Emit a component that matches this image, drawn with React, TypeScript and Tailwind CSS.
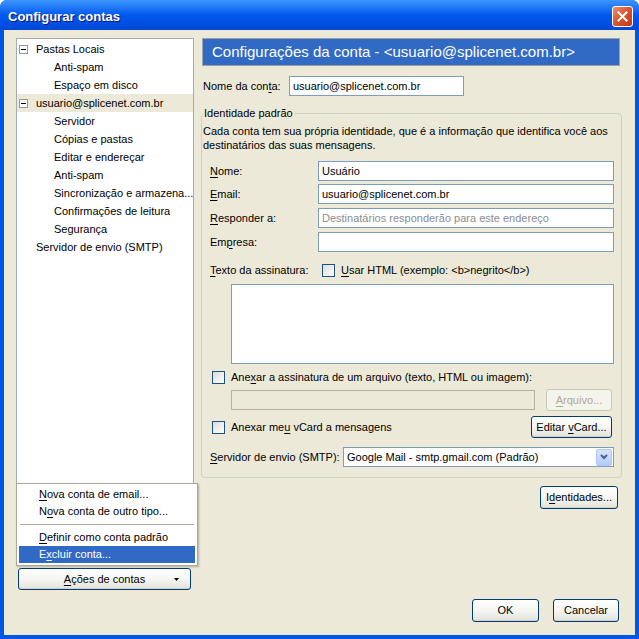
import React from "react";

const font = { fontFamily: '"Liberation Sans", Arial, sans-serif' };

function U({ children }: { children: React.ReactNode }) {
  return <span className="underline underline-offset-[2px]">{children}</span>;
}

function XpButton({
  children,
  className = "",
  disabled = false,
}: {
  children: React.ReactNode;
  className?: string;
  disabled?: boolean;
}) {
  return (
    <div
      className={
        "flex items-center justify-center rounded-[3px] border text-[11px] " +
        (disabled
          ? "border-[#C9C7BA] bg-[#F5F4EA] text-[#ACA899] "
          : "border-[#003C74] bg-gradient-to-b from-white via-[#F6F6F3] to-[#E3E2D9] text-black shadow-[inset_0_-1px_0_#D6D0C5] ") +
        className
      }
    >
      {children}
    </div>
  );
}

function Checkbox() {
  return (
    <div className="h-[13px] w-[13px] shrink-0 border border-[#1C5180] bg-gradient-to-br from-[#DCDCD7] to-white" />
  );
}

function TextInput({
  value,
  placeholder,
  className = "",
}: {
  value?: string;
  placeholder?: string;
  className?: string;
}) {
  return (
    <div
      className={
        "flex h-[20px] items-center border border-[#7F9DB9] bg-white pl-[3px] text-[11px] " +
        className
      }
    >
      {value ? (
        <span className="text-black">{value}</span>
      ) : (
        <span className="text-[#8D8D8D]">{placeholder}</span>
      )}
    </div>
  );
}

function Expander() {
  return (
    <div className="flex h-[9px] w-[9px] items-center justify-center border border-[#919B9C] bg-white">
      <div className="h-px w-[5px] bg-black" />
    </div>
  );
}

type TreeItem = { label: string; level: 0 | 1; expander?: boolean; selected?: boolean };

const tree: TreeItem[] = [
  { label: "Pastas Locais", level: 0, expander: true },
  { label: "Anti-spam", level: 1 },
  { label: "Espaço em disco", level: 1 },
  { label: "usuario@splicenet.com.br", level: 0, expander: true, selected: true },
  { label: "Servidor", level: 1 },
  { label: "Cópias e pastas", level: 1 },
  { label: "Editar e endereçar", level: 1 },
  { label: "Anti-spam", level: 1 },
  { label: "Sincronização e armazena...", level: 1 },
  { label: "Confirmações de leitura", level: 1 },
  { label: "Segurança", level: 1 },
  { label: "Servidor de envio (SMTP)", level: 0 },
];

export default function App() {
  return (
    <div
      className="flex h-[639px] w-[639px] flex-col overflow-hidden rounded-t-[7px] bg-[#0055E5] text-[11px] text-black"
      style={font}
    >
      {/* title bar */}
      <div className="flex h-[30px] shrink-0 items-center justify-between bg-gradient-to-b from-[#3D95FF] via-[#0058EE] to-[#0047D8] pl-[8px] pr-[6px]">
        <span className="pt-[3px] text-[13px] font-bold text-white [text-shadow:1px_1px_0_#0A1883]">
          Configurar contas
        </span>
        <div className="mt-[2px] flex h-[21px] w-[21px] items-center justify-center rounded-[3px] border border-white bg-gradient-to-br from-[#E9906F] via-[#D9522C] to-[#C0391A]">
          <svg width="11" height="11" viewBox="0 0 11 11">
            <path d="M1.5 1.5 L9.5 9.5 M9.5 1.5 L1.5 9.5" stroke="white" strokeWidth="2" strokeLinecap="square" />
          </svg>
        </div>
      </div>

      {/* client */}
      <div className="mx-[4px] mb-[4px] flex flex-1 flex-col bg-[#ECE9D8] px-[12px] pt-[8px]">
        <div className="flex h-[552px]">
          {/* left column */}
          <div className="relative flex w-[184px] shrink-0 flex-col">
            <div className="h-[527px] w-[178px] border border-[#A5ACB2] bg-white pt-[1px]">
              {tree.map((t, i) => (
                <div
                  key={i}
                  className={
                    "flex h-[18px] items-center whitespace-nowrap " +
                    (t.selected ? "bg-[#ECE9D8]" : "")
                  }
                >
                  {t.level === 0 ? (
                    <>
                      <div className="ml-[2px] w-[9px]">{t.expander ? <Expander /> : null}</div>
                      <span className="ml-[8px]">{t.label}</span>
                    </>
                  ) : (
                    <span className="ml-[37px]">{t.label}</span>
                  )}
                </div>
              ))}
            </div>
            <XpButton className="relative ml-[2px] mt-[3px] h-[22px] w-[173px]">
              <span>
                <U>A</U>ções de contas
              </span>
              <svg className="absolute right-[11px] top-[9px]" width="5" height="3" viewBox="0 0 5 3">
                <path d="M0 0 H5 L2.5 3 Z" fill="black" />
              </svg>
            </XpButton>

            {/* popup menu */}
            <div className="absolute left-0 top-[445px] w-[182px] border border-[#ACA899] bg-white p-[2px] shadow-[1px_1px_2px_rgba(0,0,0,0.25)]">
              <div className="flex h-[17px] items-center pl-[20px]">
                <U>N</U>ova conta de email...
              </div>
              <div className="flex h-[17px] items-center pl-[20px]">
                N<U>o</U>va conta de outro tipo...
              </div>
              <div className="flex h-[9px] items-center px-[1px]">
                <div className="h-px w-full bg-[#ACA899]" />
              </div>
              <div className="flex h-[17px] items-center pl-[20px]">
                <U>D</U>efinir como conta padrão
              </div>
              <div className="flex h-[17px] items-center bg-[#316AC5] pl-[20px] text-white">
                E<U>x</U>cluir conta...
              </div>
            </div>
          </div>

          {/* right column */}
          <div className="flex w-[423px] shrink-0 flex-col">
            <div className="ml-[2px] flex h-[28px] w-[418px] items-center border border-[#A0A0A0] bg-[#316AC5] pl-[9px] text-[15px] text-white">
              Configurações da conta - &lt;usuario@splicenet.com.br&gt;
            </div>

            <div className="mt-[10px] flex h-[20px] items-center">
              <span className="ml-[3px] w-[86px]">
                Nome da con<U>t</U>a:
              </span>
              <TextInput value="usuario@splicenet.com.br" className="w-[175px]" />
            </div>

            <fieldset className="ml-[1px] mt-[10px] w-[421px] rounded-[4px] border border-[#D0D0BF] px-0 pb-[10px]">
              <legend className="ml-[1px] px-[1px] leading-[14px]">Identidade padrão</legend>
              <p className="ml-[1px] mt-[4px] leading-[14px]">
                Cada conta tem sua própria identidade, que é a informação que identifica você aos
                <br />
                destinatários das suas mensagens.
              </p>

              <div className="mt-[9px] flex items-center">
                <span className="ml-[8px] w-[108px]">
                  <U>N</U>ome:
                </span>
                <TextInput value="Usuário" className="w-[296px]" />
              </div>
              <div className="mt-[3px] flex items-center">
                <span className="ml-[8px] w-[108px]">
                  <U>E</U>mail:
                </span>
                <TextInput value="usuario@splicenet.com.br" className="w-[296px]" />
              </div>
              <div className="mt-[4px] flex items-center">
                <span className="ml-[8px] w-[108px]">
                  <U>R</U>esponder a:
                </span>
                <TextInput
                  placeholder="Destinatários responderão para este endereço"
                  className="w-[296px]"
                />
              </div>
              <div className="mt-[4px] flex items-center">
                <span className="ml-[8px] w-[108px]">
                  Em<U>p</U>resa:
                </span>
                <TextInput className="w-[296px]" />
              </div>

              <div className="mt-[10px] flex h-[17px] items-center">
                <span className="ml-[8px] w-[112px]">
                  <U>T</U>exto da assinatura:
                </span>
                <Checkbox />
                <span className="ml-[6px]">
                  <U>U</U>sar HTML (exemplo: &lt;b&gt;negrito&lt;/b&gt;)
                </span>
              </div>
              <div className="ml-[29px] mt-[5px] h-[80px] w-[383px] border border-[#7F9DB9] bg-white" />

              <div className="mt-[5px] flex h-[17px] items-center">
                <div className="ml-[10px]">
                  <Checkbox />
                </div>
                <span className="ml-[6px]">
                  Ane<U>x</U>ar a assinatura de um arquivo (texto, HTML ou imagem):
                </span>
              </div>
              <div className="mt-[3px] flex h-[22px] items-center">
                <div className="ml-[29px] h-[20px] w-[304px] border border-[#B5B2A6] bg-[#ECE9D8]" />
                <XpButton disabled className="ml-[11px] h-[22px] w-[66px]">
                  <span>
                    <U>A</U>rquivo...
                  </span>
                </XpButton>
              </div>

              <div className="mt-[5px] flex h-[22px] items-center">
                <div className="ml-[10px]">
                  <Checkbox />
                </div>
                <span className="ml-[6px]">
                  Anexar me<U>u</U> vCard a mensagens
                </span>
                <XpButton className="ml-auto mr-[9px] h-[22px] w-[81px]">
                  <span>
                    Editar <U>v</U>Card...
                  </span>
                </XpButton>
              </div>

              <div className="mt-[9px] flex h-[20px] items-center">
                <span className="ml-[8px] w-[133px]">
                  <U>S</U>ervidor de envio (SMTP):
                </span>
                <div className="flex h-[20px] w-[271px] items-center border border-[#7F9DB9] bg-white pl-[3px]">
                  <span className="flex-1">Google Mail - smtp.gmail.com (Padrão)</span>
                  <div className="mr-px flex h-[17px] w-[16px] items-center justify-center rounded-[2px] border border-[#B1C7F5] bg-gradient-to-b from-[#D6E3FD] to-[#B4CBF8]">
                    <svg width="8" height="6" viewBox="0 0 8 6">
                      <path d="M1 1 L4 4 L7 1" stroke="#4D6185" strokeWidth="2" fill="none" />
                    </svg>
                  </div>
                </div>
              </div>
            </fieldset>

            <div className="mt-[8px] flex justify-end pr-[5px]">
              <XpButton className="h-[23px] w-[78px]">
                <span>
                  I<U>d</U>entidades...
                </span>
              </XpButton>
            </div>
          </div>
        </div>

        {/* dialog buttons */}
        <div className="mt-[9px] flex justify-end gap-[14px] pr-[4px]">
          <XpButton className="h-[23px] w-[67px]">OK</XpButton>
          <XpButton className="h-[23px] w-[66px]">Cancelar</XpButton>
        </div>
      </div>
    </div>
  );
}
